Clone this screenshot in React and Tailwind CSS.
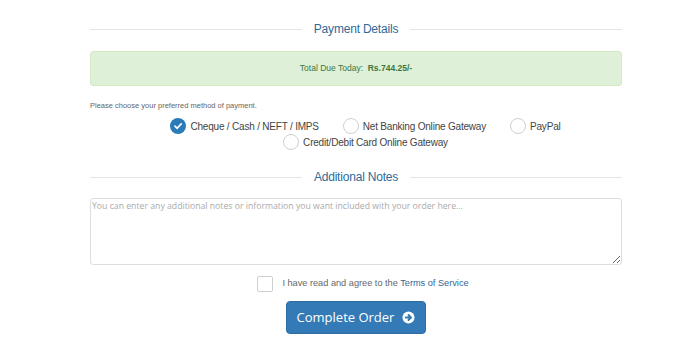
import { useState } from "react";

const arial = { fontFamily: '"Liberation Sans", Arial, sans-serif' };
const openSans = { fontFamily: '"Open Sans", "Liberation Sans", sans-serif' };

function SectionTitle({ children }) {
  return (
    <div className="flex items-center h-[16px]">
      <div className="flex-1 h-px bg-[#e4e4e4]" />
      <span className="px-[12px] text-[12px] tracking-[-0.2px] leading-[16px] text-[#2f6a99]" style={arial}>
        {children}
      </span>
      <div className="flex-1 h-px bg-[#e4e4e4]" />
    </div>
  );
}

function Radio({ checked, label, onClick }) {
  return (
    <label onClick={onClick} className="ml-[24px] flex items-center h-[16px] cursor-pointer">
      {checked ? (
        <span className="w-[16px] h-[16px] rounded-full bg-[#2b7bb9] flex items-center justify-center">
          <svg width="10" height="10" viewBox="0 0 10 10">
            <path d="M2 5.2 L4.2 7.3 L8.2 2.9" fill="none" stroke="#fff" strokeWidth="1.7" strokeLinecap="round" strokeLinejoin="round" />
          </svg>
        </span>
      ) : (
        <span className="w-[16px] h-[16px] rounded-full border border-[#cfcfcf] bg-white" />
      )}
      <span className="ml-[4px] text-[10px] tracking-[-0.2px] text-[#444]" style={arial}>{label}</span>
    </label>
  );
}

export default function App() {
  const [method, setMethod] = useState("cheque");
  const [agree, setAgree] = useState(false);

  const methods = [
    { id: "cheque", label: "Cheque / Cash / NEFT / IMPS" },
    { id: "netbanking", label: "Net Banking Online Gateway" },
    { id: "paypal", label: "PayPal" },
    { id: "card", label: "Credit/Debit Card Online Gateway" },
  ];

  return (
    <div className="w-[700px] h-[347px] bg-white overflow-hidden">
      <div className="ml-[90px] w-[532px] flex flex-col">
        <div className="mt-[21px]">
          <SectionTitle>Payment Details</SectionTitle>
        </div>

        <div
          className="mt-[14px] h-[35px] rounded-[3px] bg-[#dff0d8] border border-[#d6e9c6] flex items-center justify-center text-[8.5px] text-[#3c763d]"
          style={arial}
        >
          Total Due Today:&nbsp;&nbsp;<b>Rs.744.25/-</b>
        </div>

        <p className="mt-[15px] text-[7.5px] leading-[10px] text-[#666]" style={arial}>
          Please choose your preferred method of payment.
        </p>

        <div className="mt-[7px] flex flex-wrap justify-center pr-[5px]">
          {methods.map((m) => (
            <Radio key={m.id} label={m.label} checked={method === m.id} onClick={() => setMethod(m.id)} />
          ))}
        </div>

        <div className="mt-[19px]">
          <SectionTitle>Additional Notes</SectionTitle>
        </div>

        <textarea
          className="mt-[13px] h-[67px] w-full border border-[#ddd] rounded-[3px] px-[1px] py-[1px] text-[8.7px] leading-[13px] text-[#555] placeholder:text-[#aaa] outline-none"
          style={openSans}
          placeholder="You can enter any additional notes or information you want included with your order here..."
        />

        <div className="mt-[11px] flex items-center justify-center h-[16px] pl-[14px]">
          <span
            onClick={() => setAgree(!agree)}
            className="w-[16px] h-[16px] border border-[#cfcfcf] rounded-[2px] bg-white cursor-pointer"
          />
          <span className="ml-[9px] text-[9.2px] text-[#666]" style={arial}>
            I have read and agree to the <a className="text-[#2f6a99]">Terms of Service</a>
          </span>
        </div>

        <div className="mt-[9px] flex justify-center">
          <button
            className="w-[140px] h-[33px] rounded-[4px] bg-[#337ab7] border border-[#2e6da4] text-white text-[13px] flex items-center justify-center"
            style={openSans}
          >
            Complete Order
            <svg className="ml-[8px]" width="13" height="13" viewBox="0 0 14 14">
              <circle cx="7" cy="7" r="6.5" fill="#fff" />
              <path d="M4 7 H9.5 M7 4.3 L9.7 7 L7 9.7" fill="none" stroke="#337ab7" strokeWidth="2" strokeLinecap="round" strokeLinejoin="round" />
            </svg>
          </button>
        </div>
      </div>
    </div>
  );
}
